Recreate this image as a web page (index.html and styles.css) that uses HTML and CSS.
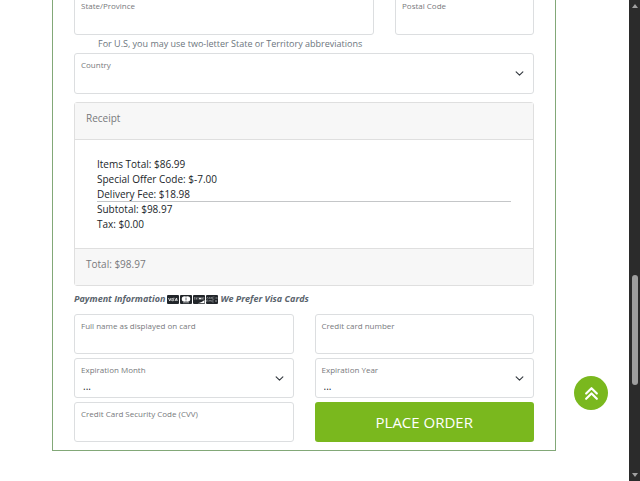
FILE: index.html
```html
<!DOCTYPE html>
<html lang="en">

<head>
    <meta charset="utf-8">
    <title>Checkout</title>
    <meta name="viewport" content="width=device-width, initial-scale=1">
    <link rel="stylesheet" href="styles.css">
</head>

<body>
    <main class="page">
        <form class="checkout">
            <div class="row row-region">
                <div class="field">
                    <label for="state">State/Province</label>
                    <input type="text" id="state">
                </div>
                <div class="field">
                    <label for="postal">Postal Code</label>
                    <input type="text" id="postal">
                </div>
            </div>
            <p class="help">For U.S, you may use two-letter State or Territory abbreviations</p>
            <div class="field">
                <label for="country">Country</label>
                <select id="country">
                    <option></option>
                </select>
            </div>

            <section class="card">
                <div class="card-header">Receipt</div>
                <div class="card-body">
                    <div>Items Total: $86.99</div>
                    <div>Special Offer Code: $-7.00</div>
                    <div class="fee">Delivery Fee: $18.98</div>
                    <div>Subtotal: $98.97</div>
                    <div>Tax: $0.00</div>
                </div>
                <div class="card-footer">Total: $98.97</div>
            </section>

            <h2 class="payment-title">
                <span>Payment Information</span>
                <span class="brands">
                    <svg viewBox="0 0 24 18" aria-hidden="true">
                        <rect width="24" height="18" rx="2" fill="#212529" />
                        <path d="M3 6l2.500 6 2.500-6M10.500 6l-1 6M15 6.500c-3-1-4 1.500-2 2.500s0 3-2.500 2.500M16 12l3-6 1.500 6M17 10h3" fill="none" stroke="#fff" stroke-width="1.500" />
                    </svg>
                    <svg viewBox="0 0 24 18" aria-hidden="true">
                        <rect width="24" height="18" rx="2" fill="#212529" />
                        <circle cx="9" cy="8" r="5.500" fill="#fff" />
                        <circle cx="15" cy="8" r="5.500" fill="#fff" />
                        <path d="M12 4c-2 2.500-2 5.500 0 8 2-2.500 2-5.500 0-8z" fill="#8a8d90" />
                        <path d="M6 15.500h12" stroke="#fff" />
                    </svg>
                    <svg viewBox="0 0 24 18" aria-hidden="true">
                        <rect width="24" height="18" rx="2" fill="#212529" />
                        <path d="M2 5.500h3M2 8h3M7 5v4M9 5.500h2M9 8h2M17 5l1 4 1-4M20.500 5.500h2M20.500 8h2" fill="none" stroke="#fff" />
                        <circle cx="14" cy="7" r="2" fill="#fff" />
                        <path d="M23 10c-3 3-8 5-14 6.500h14z" fill="#fff" />
                    </svg>
                    <svg viewBox="0 0 24 18" aria-hidden="true">
                        <rect width="24" height="18" rx="2" fill="#212529" />
                        <path d="M1 8l2-4 2 4M7 8V4l2 3 2-3v4M17 4h-4v4h4M19 4l4 4M23 4l-4 4M1 14v-4h3M1 12h3M6 14v-4l2 2 2-2v4M16 10h-4v4h4M18 10l4 4M22 10l-4 4" fill="none" stroke="#9da1a5" />
                    </svg>
                </span>
                <span>We Prefer Visa Cards</span>
            </h2>

            <div class="row payment">
                <div class="field">
                    <label for="cardName">Full name as displayed on card</label>
                    <input type="text" id="cardName">
                </div>
                <div class="field">
                    <label for="cardNumber">Credit card number</label>
                    <input type="text" id="cardNumber">
                </div>
                <div class="field">
                    <label for="expMonth">Expiration Month</label>
                    <select id="expMonth">
                        <option>...</option>
                    </select>
                </div>
                <div class="field">
                    <label for="expYear">Expiration Year</label>
                    <select id="expYear">
                        <option>...</option>
                    </select>
                </div>
                <div class="field">
                    <label for="cvv">Credit Card Security Code (CVV)</label>
                    <input type="text" id="cvv">
                </div>
                <button type="submit" class="btn-order">PLACE ORDER</button>
            </div>
        </form>
    </main>

    <button type="button" class="to-top" aria-label="Back to top">
        <svg viewBox="0 0 14 14" aria-hidden="true">
            <path d="M2 7l5-5 5 5M2 12l5-5 5 5" fill="none" stroke="#fff" stroke-width="2" stroke-linecap="round" stroke-linejoin="round" />
        </svg>
    </button>

    <div class="scrollbar" aria-hidden="true">
        <span class="arrow arrow-up"></span>
        <span class="track-before"></span>
        <span class="thumb"></span>
        <span class="track-after"></span>
        <span class="arrow arrow-down"></span>
    </div>
</body>

</html>
```

FILE: styles.css
```css
* {
    box-sizing: border-box;
}

body {
    margin: 0;
    height: 100vh;
    overflow: hidden;
    display: flex;
    background: #fff;
    color: #212529;
    font-family: "Open Sans", sans-serif;
    font-size: 10px;
    line-height: 15px;
}

.page {
    flex: 1;
    padding: 0 73px 0 52px;
}

.checkout {
    margin-top: -7px;
    padding: 0 21px 8px;
    border: 1px solid #82a878;
}

.row {
    display: grid;
    column-gap: 21px;
    row-gap: 4px;
}

.row-region {
    grid-template-columns: 300fr 139fr;
}

.payment {
    grid-template-columns: 1fr 1fr;
}

.field {
    position: relative;
    height: 41px;
}

.payment .field {
    height: 40px;
}

.field label {
    position: absolute;
    top: 6px;
    left: 7px;
    color: #77797c;
    font-size: 8px;
    line-height: 12px;
    pointer-events: none;
}

.field input,
.field select {
    display: block;
    width: 100%;
    height: 100%;
    padding: 16px 8px 0;
    border: 1px solid #dcdee0;
    border-radius: 3px;
    background: #fff;
    color: #212529;
    font-family: inherit;
    font-size: 10px;
}

.field select {
    appearance: none;
    background: #fff url("data:image/svg+xml,%3Csvg xmlns='http://www.w3.org/2000/svg' viewBox='0 0 16 16'%3E%3Cpath fill='none' stroke='%23343a40' stroke-linecap='round' stroke-linejoin='round' stroke-width='2' d='m2 5 6 6 6-6'/%3E%3C/svg%3E") no-repeat right 9px center / 9px 9px;
}

.help {
    margin: 0;
    padding: 1px 24px 2px;
    color: #6c757d;
    font-size: 9px;
}

.card {
    margin-top: 8px;
    border: 1px solid #dfdfdf;
    border-radius: 3px;
}

.card-header,
.card-footer {
    padding: 8px 11px 13px;
    background: #f7f7f7;
    color: #77797c;
}

.card-header {
    border-bottom: 1px solid #dfdfdf;
}

.card-footer {
    border-top: 1px solid #dfdfdf;
}

.card-body {
    padding: 17px 22px 16px;
}

.fee {
    height: 15px;
    border-bottom: 1px solid #c4c6c8;
}

.payment-title {
    display: flex;
    align-items: center;
    gap: 2px;
    margin: 5px 0 7px;
    color: #5a646d;
    font-size: 9px;
    font-style: italic;
    font-weight: 700;
    line-height: 16px;
}

.brands {
    display: flex;
    gap: 1px;
}

.brands svg {
    width: 12px;
    height: 9px;
}

.btn-order {
    border: none;
    border-radius: 3px;
    background: #7ab81e;
    color: #fff;
    font-family: inherit;
    font-size: 15px;
    font-weight: 500;
    cursor: pointer;
}

.to-top {
    position: fixed;
    right: 32px;
    bottom: 71px;
    display: flex;
    align-items: center;
    justify-content: center;
    width: 34px;
    height: 34px;
    padding: 0;
    border: none;
    border-radius: 50%;
    background: #7ab81e;
    cursor: pointer;
}

.to-top svg {
    width: 15px;
    height: 15px;
}

.scrollbar {
    display: flex;
    flex-direction: column;
    align-items: center;
    width: 11px;
    padding: 4px 0;
    background: #2b2b2b;
}

.arrow {
    border: 3px solid transparent;
}

.arrow-up {
    border-top: none;
    border-bottom: 4px solid #a0a0a0;
}

.arrow-down {
    border-bottom: none;
    border-top: 4px solid #a0a0a0;
}

.track-before {
    flex: 267;
}

.thumb {
    flex: 110;
    width: 6px;
    border-radius: 3px;
    background: #9e9e9e;
}

.track-after {
    flex: 88;
}
```
